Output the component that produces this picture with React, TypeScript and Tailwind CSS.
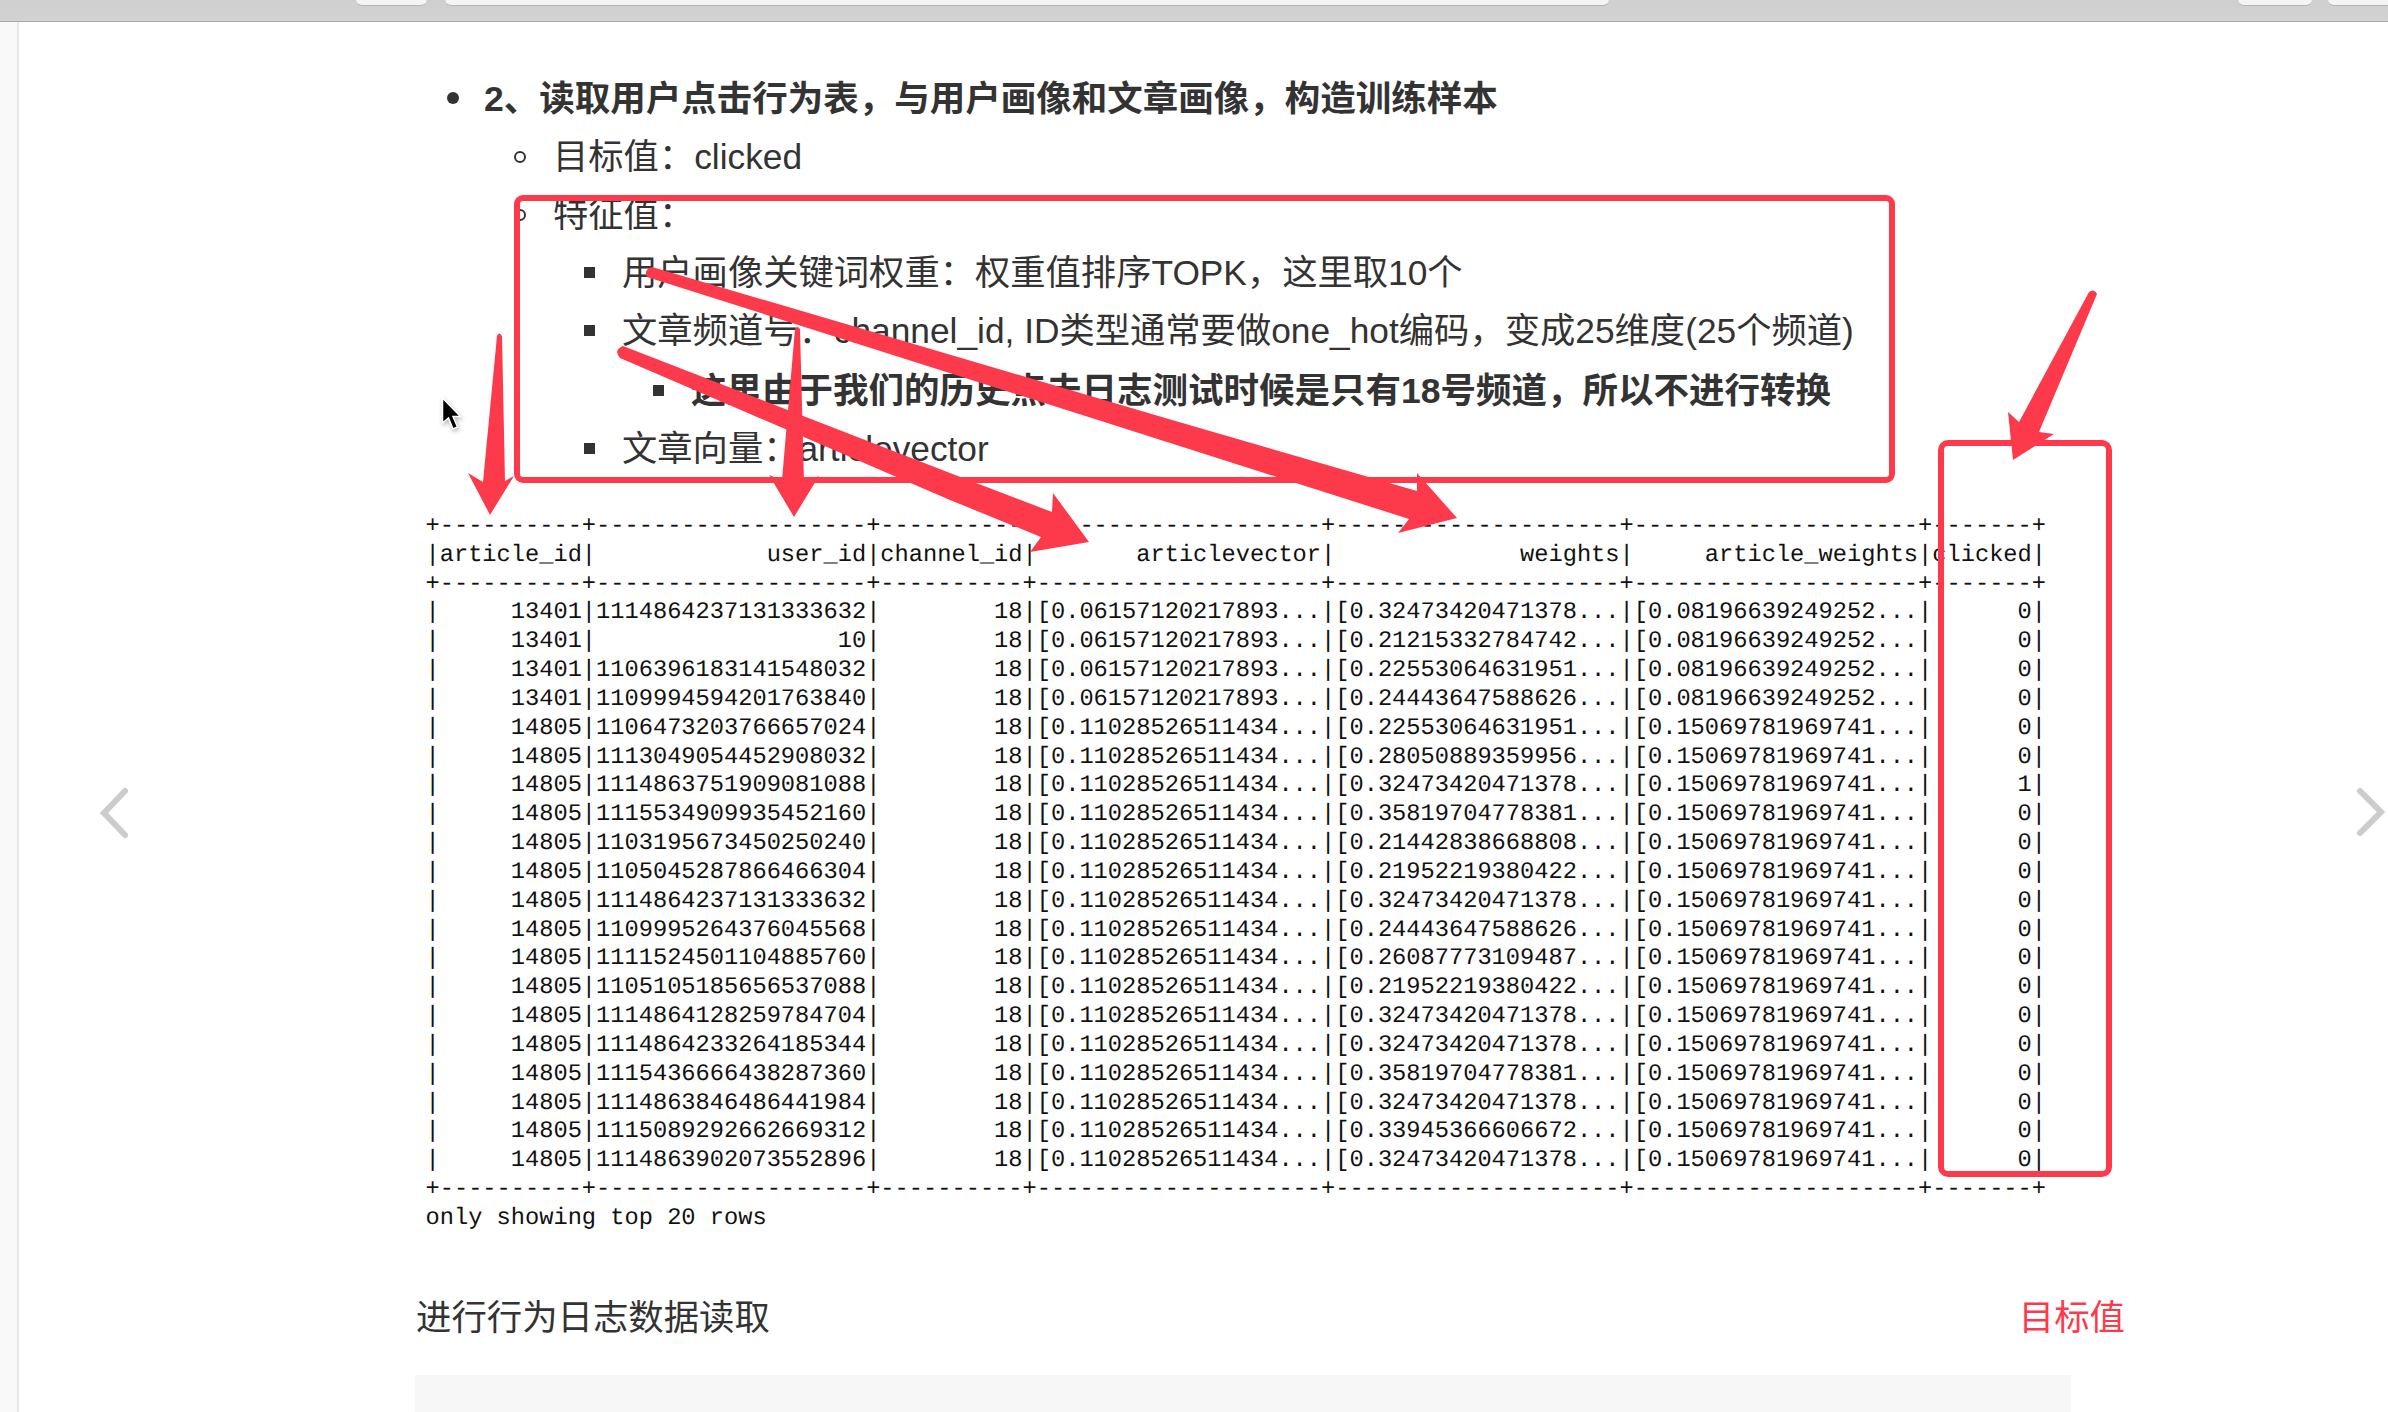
import React from 'react';

const RED = '#fc3a4b';

type Row = [string, string, string, string, string, string];

const rows: Row[] = [
  ['13401', '1114864237131333632', '0.06157120217893', '0.32473420471378', '0.08196639249252', '0'],
  ['13401', '10', '0.06157120217893', '0.21215332784742', '0.08196639249252', '0'],
  ['13401', '1106396183141548032', '0.06157120217893', '0.22553064631951', '0.08196639249252', '0'],
  ['13401', '1109994594201763840', '0.06157120217893', '0.24443647588626', '0.08196639249252', '0'],
  ['14805', '1106473203766657024', '0.11028526511434', '0.22553064631951', '0.15069781969741', '0'],
  ['14805', '1113049054452908032', '0.11028526511434', '0.28050889359956', '0.15069781969741', '0'],
  ['14805', '1114863751909081088', '0.11028526511434', '0.32473420471378', '0.15069781969741', '1'],
  ['14805', '1115534909935452160', '0.11028526511434', '0.35819704778381', '0.15069781969741', '0'],
  ['14805', '1103195673450250240', '0.11028526511434', '0.21442838668808', '0.15069781969741', '0'],
  ['14805', '1105045287866466304', '0.11028526511434', '0.21952219380422', '0.15069781969741', '0'],
  ['14805', '1114864237131333632', '0.11028526511434', '0.32473420471378', '0.15069781969741', '0'],
  ['14805', '1109995264376045568', '0.11028526511434', '0.24443647588626', '0.15069781969741', '0'],
  ['14805', '1111524501104885760', '0.11028526511434', '0.26087773109487', '0.15069781969741', '0'],
  ['14805', '1105105185656537088', '0.11028526511434', '0.21952219380422', '0.15069781969741', '0'],
  ['14805', '1114864128259784704', '0.11028526511434', '0.32473420471378', '0.15069781969741', '0'],
  ['14805', '1114864233264185344', '0.11028526511434', '0.32473420471378', '0.15069781969741', '0'],
  ['14805', '1115436666438287360', '0.11028526511434', '0.35819704778381', '0.15069781969741', '0'],
  ['14805', '1114863846486441984', '0.11028526511434', '0.32473420471378', '0.15069781969741', '0'],
  ['14805', '1115089292662669312', '0.11028526511434', '0.33945366606672', '0.15069781969741', '0'],
  ['14805', '1114863902073552896', '0.11028526511434', '0.32473420471378', '0.15069781969741', '0'],
];

const rule = '+----------+-------------------+----------+--------------------+--------------------+--------------------+-------+';

const dataLine = (r: Row) =>
  '|' +
  [
    r[0].padStart(10),
    r[1].padStart(19),
    '18'.padStart(10),
    `[${r[2]}...`,
    `[${r[3]}...`,
    `[${r[4]}...`,
    r[5].padStart(7),
  ].join('|') +
  '|';

const headerLine =
  '|article_id|            user_id|channel_id|       articlevector|             weights|     article_weights|clicked|';

const tableText = [rule, headerLine, rule, ...rows.map(dataLine), rule, 'only showing top 20 rows'].join('\n');

// list markers are larger than the browser's own, so they are drawn by hand
const markers = {
  disc: 'absolute left-[-37px] top-[22px] size-[12px] rounded-full bg-[#333]',
  circle: 'absolute left-[-39px] top-[23px] size-[12px] rounded-full border-2 border-[#333]',
  square: 'absolute left-[-38px] top-[23px] size-[11px] bg-[#333]',
};

const Item = ({
  marker,
  bold,
  children,
}: {
  marker: keyof typeof markers;
  bold?: boolean;
  children: React.ReactNode;
}) => (
  <li className={bold ? 'relative text-[35.5px] font-bold' : 'relative'}>
    <span className={markers[marker]} />
    {children}
  </li>
);

const Annotations = () => (
  <>
    <div className="absolute left-[514px] top-[195px] w-[1381px] h-[288px] border-[6px] border-[#fc3a4b] rounded-[9px]" />
    <div className="absolute left-[1938px] top-[440px] w-[174px] h-[737px] border-[6px] border-[#fc3a4b] rounded-[10px]" />
    <svg className="absolute left-0 top-0" width="2388" height="1412" fill={RED}>
      <path d="M497 336 Q499 331 502 336 L505 481 L514 476 L490 515 L468 473 L483 482 Z" />
      <path d="M795 329 Q797 325 800 329 L804 482 L819 476 L794 517 L769 475 L782 480 Z" />
      <path d="M652 267 L1172 420 L1417 491 L1417 473 L1457 518 L1398 533 L1409 519 L1098 420 L647 277 Q643 270 652 267 Z" />
      <path d="M623 346 L950 473 L1052 512 L1053 493 L1089 542 L1030 552 L1041 537 L950 500 L620 358 Q613 350 623 346 Z" />
      <path d="M2089 292 Q2094 288 2097 294 L2039 432 L2054 434 L2013 460 L2008 412 L2019 422 Z" />
    </svg>
  </>
);

const Cursor = () => (
  <svg className="absolute left-[439px] top-[396px] drop-shadow-[1px_2px_2px_rgba(0,0,0,0.3)]" width="28" height="38" viewBox="0 0 28 38">
    <path d="M3.5 2 L3.5 27 L9.5 22 L14 33 L18.5 31 L14 20.5 L21.5 20.5 Z" fill="#000" stroke="#fff" strokeWidth="1.5" />
  </svg>
);

const Chevron = ({ side }: { side: 'left' | 'right' }) => (
  <svg
    className={side === 'left' ? 'absolute left-[95px] top-[780px]' : 'absolute left-[2350px] top-[780px]'}
    width="38"
    height="66"
    viewBox="0 0 38 66"
    fill="none"
    stroke="#cccccc"
    strokeWidth="6"
    strokeLinecap="round"
    strokeLinejoin="miter"
  >
    {side === 'left' ? <path d="M30 11 L9 33 L30 55" /> : <path d="M10 11 L31 32 L10 53" />}
  </svg>
);

export default function App() {
  return (
    <div className="relative h-[1412px] overflow-hidden bg-white text-[#333] font-['Liberation_Sans','Noto_Sans_CJK_SC',sans-serif]">
      <header className="flex h-[22px] items-start border-b border-[#ababab] bg-gradient-to-b from-[#cfcfcf] to-[#d2d2d2] pl-[356px]">
        <div className="h-[6px] w-[71px] rounded-b-[6px] border-b border-[#b4b4b4] bg-[#f4f4f4]" />
        <div className="ml-[18px] h-[6px] w-[1164px] rounded-b-[6px] border-b border-[#b4b4b4] bg-[#f4f4f4]" />
        <div className="ml-[629px] h-[6px] w-[74px] rounded-b-[6px] border-b border-[#b4b4b4] bg-[#f4f4f4]" />
        <div className="ml-[16px] h-[6px] flex-1 rounded-bl-[6px] border-b border-[#b4b4b4] bg-[#f4f4f4]" />
      </header>

      <div className="flex h-[1390px]">
        <aside className="w-[19px] shrink-0 border-r-2 border-[#e8e8e8] bg-[#f9f9f9]" />

        <main className="flex-1 pl-[396px] pt-[48px]">
          <ul className="pl-[69px] text-[35.3px] leading-[58px]">
            <Item marker="disc" bold>
              2、读取用户点击行为表，与用户画像和文章画像，构造训练样本
            </Item>
            <ul className="pl-[69px]">
              <Item marker="circle">目标值：clicked</Item>
              <Item marker="circle">特征值：</Item>
              <ul className="pl-[69px]">
                <Item marker="square">用户画像关键词权重：权重值排序TOPK，这里取10个</Item>
                <Item marker="square">文章频道号：channel_id, ID类型通常要做one_hot编码，变成25维度(25个频道)</Item>
                <ul className="mt-[2px] pl-[69px]">
                  <Item marker="square" bold>
                    这里由于我们的历史点击日志测试时候是只有18号频道，所以不进行转换
                  </Item>
                </ul>
                <Item marker="square">文章向量：articlevector</Item>
              </ul>
            </ul>
          </ul>

          <pre className="mt-[35px] pl-[10.5px] font-['Liberation_Mono',monospace] text-[23.7px] leading-[28.83px] text-[#111] [text-rendering:geometricPrecision]">
            {tableText}
          </pre>

          <div className="mt-[55px] flex w-[1710px] justify-between pl-[1px] text-[35.4px] leading-[58px]">
            <span>进行行为日志数据读取</span>
            <span className="text-[#fc3a4b]">目标值</span>
          </div>

          <div className="mt-[28px] h-[38px] w-[1656px] bg-[#f7f7f7]" />
        </main>
      </div>

      <Chevron side="left" />
      <Chevron side="right" />
      <Cursor />
      <Annotations />
    </div>
  );
}
